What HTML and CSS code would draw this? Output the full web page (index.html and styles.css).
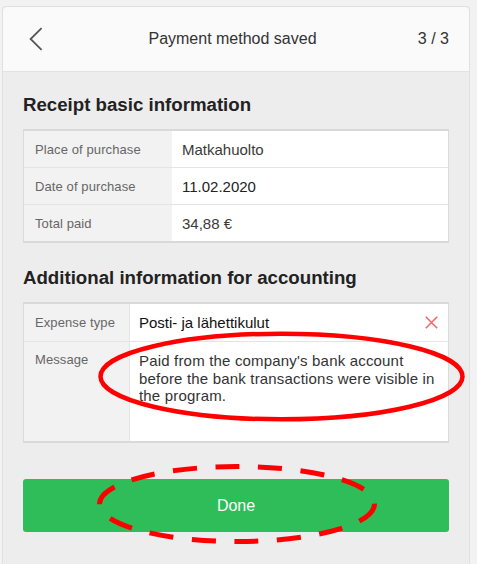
FILE: index.html
```html
<!DOCTYPE html>
<html lang="en">
<head>
<meta charset="utf-8">
<title>Payment method saved</title>
<link rel="stylesheet" href="styles.css">
</head>
<body>
<div class="card">
  <header class="top">
    <button class="back" aria-label="Back">
      <svg width="14" height="24" viewBox="0 0 14 24"><path d="M12.6 1.2 L1.6 12 L12.6 22.8" fill="none" stroke="#555" stroke-width="1.8"/></svg>
    </button>
    <div class="title">Payment method saved</div>
    <div class="step">3 / 3</div>
  </header>
  <main class="content">
    <h2 class="heading">Receipt basic information</h2>
    <div class="info basic">
      <div class="lbl">Place of purchase</div><div class="val">Matkahuolto</div>
      <div class="lbl sep">Date of purchase</div><div class="val sep dark">11.02.2020</div>
      <div class="lbl sep">Total paid</div><div class="val sep">34,88 €</div>
    </div>
    <h2 class="heading second">Additional information for accounting</h2>
    <div class="info extra">
      <div class="lbl side">Expense type</div>
      <div class="val input">
        <span>Posti- ja lähettikulut</span>
        <svg class="clear" width="13" height="13" viewBox="0 0 13 13"><path d="M0.8 0.8 L12.2 12.2 M12.2 0.8 L0.8 12.2" stroke="#f06a6a" stroke-width="1.6"/></svg>
      </div>
      <div class="lbl side sep msg-lbl">Message</div>
      <div class="val sep msg">Paid from the company's bank account<br>before the bank transactions were visible in<br>the program.</div>
    </div>
    <button class="done">Done</button>
  </main>
</div>
<svg class="marks" width="477" height="564" viewBox="0 0 477 564">
  <ellipse cx="281.5" cy="376.5" rx="181" ry="42.8" fill="none" stroke="#f00" stroke-width="4.5"/>
  <ellipse cx="237" cy="504" rx="137.5" ry="37.5" fill="none" stroke="#f00" stroke-width="5" stroke-dasharray="24 18.5"/>
</svg>
</body>
</html>
```
FILE: styles.css
```css
html, body {
  margin: 0;
  padding: 0;
}
body {
  background: #f2f2f2;
  font-family: "Liberation Sans", Arial, sans-serif;
  height: 564px;
  overflow: hidden;
  position: relative;
}
.card {
  margin: 6px 0 0 2px;
  width: 466px;
  border: 1px solid #e0e0e0;
  border-bottom: none;
  border-radius: 4px 4px 0 0;
  background: #ededed;
  height: 557px;
  overflow: hidden;
}
.top {
  height: 64px;
  background: #fafafa;
  border-bottom: 1px solid #e2e2e2;
  border-radius: 4px 4px 0 0;
  display: flex;
  align-items: center;
}
.back {
  width: 60px;
  height: 64px;
  padding: 0 0 0 26px;
  margin: 0;
  border: 0;
  background: none;
  display: flex;
  align-items: center;
}
.back svg {
  display: block;
}
.title {
  flex: 1;
  text-align: center;
  font-size: 16px;
  color: #333;
}
.step {
  width: 47px;
  padding-right: 20px;
  text-align: right;
  font-size: 16px;
  color: #333;
}
.content {
  display: block;
  padding: 22px 20px 20px;
}
.heading {
  margin: 0 0 13px;
  font-size: 18.67px;
  line-height: 22px;
  font-weight: bold;
  color: #222;
}
.heading.second {
  margin-top: 24px;
}
.info {
  display: grid;
  border-left: 1px solid #dadada;
  border-right: 1px solid #dadada;
  border-top: 2px solid #d9d9d9;
  border-bottom: 2px solid #d9d9d9;
  background: #fff;
}
.basic {
  grid-template-columns: 148px 1fr;
}
.extra {
  grid-template-columns: 106px 1fr;
}
.lbl {
  background: #f2f2f2;
  font-size: 13px;
  letter-spacing: 0.1px;
  color: #666;
  padding: 0 11px;
  height: 36px;
  display: flex;
  align-items: center;
}
.val {
  font-size: 15px;
  color: #3a3a3a;
  padding: 0 10px;
  height: 36px;
  display: flex;
  align-items: center;
}
.val.dark {
  color: #222;
}
.sep {
  border-top: 1px solid #e4e4e4;
}
.extra .lbl,
.extra .val {
  height: 37px;
}
.side {
  border-right: 1px solid #e6e6e6;
}
.input {
  justify-content: space-between;
  padding: 0 10px 0 9px;
  color: #111;
}
.clear {
  display: block;
}
.extra .msg-lbl,
.extra .msg {
  height: 100px;
  align-items: flex-start;
  padding-top: 10px;
  box-sizing: border-box;
}
.msg {
  display: block;
  padding: 10px 9px 0;
  line-height: 17.5px;
  letter-spacing: 0.18px;
  color: #333;
}
.done {
  display: block;
  margin-top: 36px;
  width: 100%;
  height: 53px;
  border: 0;
  border-radius: 3px;
  background: #2ebd59;
  color: #fff;
  font-family: "Liberation Sans", Arial, sans-serif;
  font-size: 16px;
}
.marks {
  position: absolute;
  top: 0;
  left: 0;
  pointer-events: none;
}
```
